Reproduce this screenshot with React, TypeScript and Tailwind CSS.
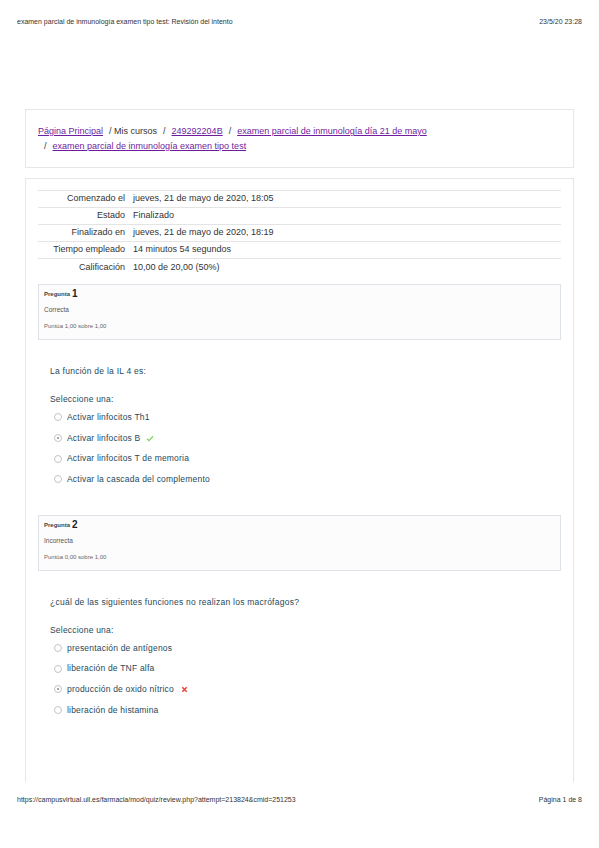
import React from "react";

interface Option {
  label: string;
  checked?: boolean;
  mark?: "ok" | "bad";
}

interface QuestionData {
  num: number;
  state: string;
  score: string;
  text: string;
  options: Option[];
}

const questions: QuestionData[] = [
  {
    num: 1,
    state: "Correcta",
    score: "Puntúa 1,00 sobre 1,00",
    text: "La función de la IL 4 es:",
    options: [
      { label: "Activar linfocitos Th1" },
      { label: "Activar linfocitos B", checked: true, mark: "ok" },
      { label: "Activar linfocitos T de memoria" },
      { label: "Activar la cascada del complemento" },
    ],
  },
  {
    num: 2,
    state: "Incorrecta",
    score: "Puntúa 0,00 sobre 1,00",
    text: "¿cuál de las siguientes funciones no realizan los macrófagos?",
    options: [
      { label: "presentación de antígenos" },
      { label: "liberación de TNF alfa" },
      { label: "producción de oxido nítrico", checked: true, mark: "bad" },
      { label: "liberación de histamina" },
    ],
  },
];

const summary = [
  ["Comenzado el", "jueves, 21 de mayo de 2020, 18:05"],
  ["Estado", "Finalizado"],
  ["Finalizado en", "jueves, 21 de mayo de 2020, 18:19"],
  ["Tiempo empleado", "14 minutos 54 segundos"],
  ["Calificación", "10,00 de 20,00 (50%)"],
];

function Radio({ checked }: { checked?: boolean }) {
  return (
    <span className="w-[8px] h-[8px] rounded-full border border-[#c4c4c4] flex items-center justify-center shrink-0">
      {checked && <span className="w-[2px] h-[2px] rounded-full bg-[#8a8a8a]" />}
    </span>
  );
}

function Question({ q, first }: { q: QuestionData; first?: boolean }) {
  return (
    <div className={first ? "" : "mt-[25px]"}>
      {/* Info box */}
      <div className="h-[56px] border border-[#dde3e9] bg-[#fcfcfd] px-[5px] pt-[3px] text-[#555]">
        <div className="h-[11px] flex items-end gap-[2px]">
          <span className="text-[6px] font-bold text-[#444]">Pregunta</span>
          <span className="text-[10px] leading-[11px] font-bold text-[#222]">{q.num}</span>
        </div>
        <div className="mt-[6px] text-[6.5px] leading-[9px]">{q.state}</div>
        <div className="mt-[8px] text-[6px] leading-[9px] text-[#666]">{q.score}</div>
      </div>

      {/* Content */}
      <div className="pl-[12px] text-[#25495b] text-[8.5px]">
        <div className="mt-[25px] leading-[12px] tracking-[0.25px]">{q.text}</div>
        <div className="mt-[16px] leading-[12px] tracking-[0.2px]">Seleccione una:</div>
        <div className="mt-[2px] pl-[4px] flex flex-col">
          {q.options.map((o) => (
            <div key={o.label} className="h-[20.7px] flex items-center gap-[5px]">
              <Radio checked={o.checked} />
              <span className="tracking-[0.2px]">{o.label}</span>
              {o.mark === "ok" && (
                <svg width="8" height="7" viewBox="0 0 9 8" className="ml-[1px]">
                  <path d="M1 4.3 L3.4 6.5 L8 1.5" fill="none" stroke="#7fd862" strokeWidth="1.5" />
                </svg>
              )}
              {o.mark === "bad" && (
                <svg width="7" height="7" viewBox="0 0 8 8" className="ml-[2px]">
                  <path d="M1.5 1.5 L6.5 6.5 M6.5 1.5 L1.5 6.5" fill="none" stroke="#e5453b" strokeWidth="1.8" />
                </svg>
              )}
            </div>
          ))}
        </div>
      </div>
    </div>
  );
}

export default function App() {
  return (
    <div
      className="w-[599px] h-[848px] bg-white flex flex-col text-[#333]"
      style={{ fontFamily: '"Liberation Sans", Arial, sans-serif' }}
    >
      {/* Print header */}
      <div className="h-[44px] px-[17px] flex items-center justify-between text-[7px] text-[#333]">
        <span>examen parcial de inmunología examen tipo test: Revisión del intento</span>
        <span>23/5/20 23:28</span>
      </div>

      {/* Breadcrumb */}
      <div className="mt-[65px] mx-[25px] h-[59px] border border-[#e6e6e6] px-[12px] pt-[14px] text-[9px] leading-[15px]">
        <div className="flex items-center gap-[6px]">
          <a className="text-[#6f1d9e] underline">Página Principal</a>
          <span>/ Mis cursos</span>
          <span>/</span>
          <a className="text-[#6f1d9e] underline">249292204B</a>
          <span>/</span>
          <a className="text-[#6f1d9e] underline">examen parcial de inmunología día 21 de mayo</a>
        </div>
        <div className="flex items-center gap-[6px] pl-[6px]">
          <span>/</span>
          <a className="text-[#6f1d9e] underline">examen parcial de inmunología examen tipo test</a>
        </div>
      </div>

      {/* Main region */}
      <div className="mt-[10px] mx-[25px] h-[604px] border-x border-t border-[#e6e6e6] px-[12px] pt-[11px]">
        {/* Summary table */}
        <div className="text-[9px] text-[#333]">
          {summary.map(([k, v], i) => (
            <div
              key={k}
              className={`flex border-t border-[#e4e4e4] ${i === summary.length - 1 ? "h-[26px] pb-[8px]" : "h-[17px]"}`}
            >
              <div className="w-[89px] pr-[2px] text-right flex items-center justify-end">{k}</div>
              <div className="pl-[6px] flex items-center">{v}</div>
            </div>
          ))}
        </div>

        {questions.map((q, i) => (
          <Question key={q.num} q={q} first={i === 0} />
        ))}
      </div>

      {/* Print footer */}
      <div className="mt-[10px] h-[16px] px-[17px] flex items-center justify-between text-[7px] text-[#333]">
        <span>https://campusvirtual.ull.es/farmacia/mod/quiz/review.php?attempt=213824&amp;cmid=251253</span>
        <span>Página 1 de 8</span>
      </div>
    </div>
  );
}
